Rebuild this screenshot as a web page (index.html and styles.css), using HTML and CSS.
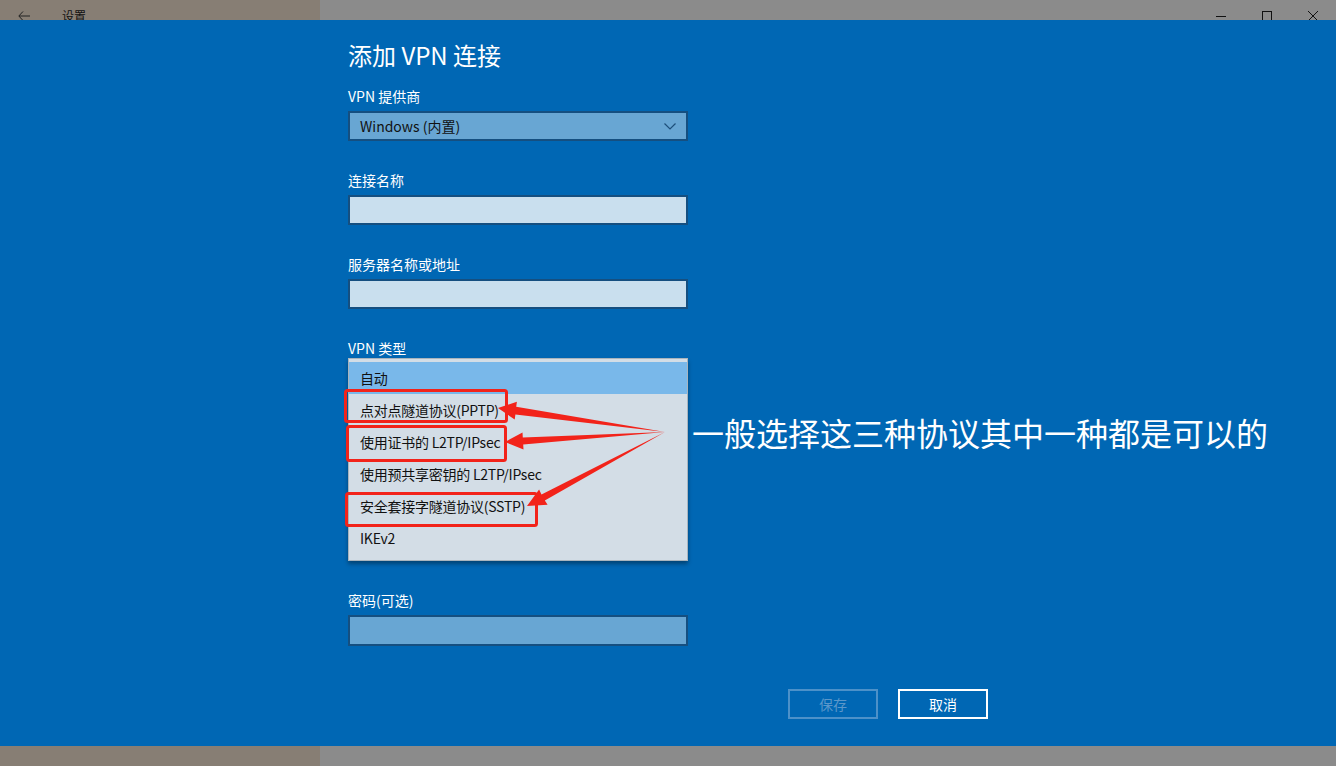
FILE: index.html
```html
<!DOCTYPE html>
<html lang="zh-CN">

<head>
      <meta charset="UTF-8">
      <meta name="viewport" content="width=device-width, initial-scale=1.0">
      <title>设置 - 添加 VPN 连接</title>
      <link rel="stylesheet" href="styles.css">
</head>

<body>
      <!-- 标题栏 -->
      <div class="titlebar">
            <div class="titlebar-left">
                  <div class="back-button">
                        <svg width="12" height="10" viewBox="0 0 12 10">
                              <path d="M12 5H1M5 0.5L0.8 5L5 9.5" fill="none" stroke="#222" stroke-width="1"/>
                        </svg>
                  </div>
                  <span class="app-title">设置</span>
            </div>
            <div class="titlebar-right">
                  <div class="win-control">
                        <svg width="10" height="10" viewBox="0 0 10 10"><path d="M0 5.5H10" stroke="#111" stroke-width="1"/></svg>
                  </div>
                  <div class="win-control">
                        <svg width="10" height="10" viewBox="0 0 10 10"><rect x="0.5" y="0.5" width="9" height="9" fill="none" stroke="#111" stroke-width="1"/></svg>
                  </div>
                  <div class="win-control">
                        <svg width="10" height="10" viewBox="0 0 10 10"><path d="M0 0L10 10M10 0L0 10" stroke="#111" stroke-width="1"/></svg>
                  </div>
            </div>
      </div>

      <!-- 设置面板 -->
      <div class="panel">
            <div class="form">
                  <h1 class="page-title">添加 VPN 连接</h1>

                  <div class="field">
                        <label>VPN 提供商</label>
                        <div class="select">
                              <span>Windows (内置)</span>
                              <svg width="12" height="7" viewBox="0 0 12 7"><path d="M0.5 0.5L6 6L11.5 0.5" fill="none" stroke="#1d4f7a" stroke-width="1.2"/></svg>
                        </div>
                  </div>

                  <div class="field">
                        <label>连接名称</label>
                        <div class="textbox"></div>
                  </div>

                  <div class="field">
                        <label>服务器名称或地址</label>
                        <div class="textbox"></div>
                  </div>

                  <div class="field field-open">
                        <label>VPN 类型</label>
                        <div class="select covered"><span>自动</span></div>
                        <!-- 展开的下拉列表 -->
                        <ul class="dropdown-list">
                              <li class="selected">自动</li>
                              <li>点对点隧道协议(PPTP)</li>
                              <li>使用证书的 L2TP/IPsec</li>
                              <li>使用预共享密钥的 L2TP/IPsec</li>
                              <li>安全套接字隧道协议(SSTP)</li>
                              <li>IKEv2</li>
                        </ul>
                  </div>

                  <!-- 被列表挡住的两项 -->
                  <div class="field covered">
                        <label>登录信息的类型</label>
                        <div class="select"><span>用户名和密码</span></div>
                  </div>

                  <div class="field covered">
                        <label>用户名(可选)</label>
                        <div class="textbox"></div>
                  </div>

                  <div class="field">
                        <label>密码(可选)</label>
                        <div class="textbox textbox-dim"></div>
                  </div>

                  <div class="actions">
                        <button class="btn btn-disabled">保存</button>
                        <button class="btn">取消</button>
                  </div>
            </div>
      </div>

      <!-- 底部条 -->
      <div class="bottombar">
            <div class="titlebar-left"></div>
            <div class="titlebar-right"></div>
      </div>

      <!-- 标注：红框和箭头 -->
      <svg class="markup" width="1336" height="766" viewBox="0 0 1336 766">
            <g fill="none" stroke="#f2231a" stroke-width="3">
                  <rect x="345.5" y="390.5" width="161" height="31" rx="2"/>
                  <rect x="347.5" y="426.5" width="158" height="34" rx="2"/>
                  <rect x="346.5" y="493.5" width="190" height="32" rx="2"/>
            </g>
            <g fill="#f2231a">
                  <polygon points="665,432 516.2,406.8 516.9,401.7 498,408 514.7,419.5 515.4,414.4"/>
                  <polygon points="665,432 522.8,437.4 522.5,432.4 505,442 523.5,449.4 523.2,444.4"/>
                  <polygon points="665,432 541.5,494.5 539.1,489.6 527,506 547.6,504.8 544.8,500.6"/>
            </g>
      </svg>
      <div class="note">一般选择这三种协议其中一种都是可以的</div>
</body>

</html>
```

FILE: styles.css
```css
/* 整个页面 */
body {
      margin: 0;
      width: 1336px;
      height: 766px;
      overflow: hidden;
      position: relative;
      font-family: "Noto Sans CJK SC", "Noto Sans", sans-serif;
      color: #fff;
}

/* 标题栏（被面板遮住一半） */
.titlebar,
.bottombar {
      display: flex;
      height: 20px;
      overflow: hidden;
}

.titlebar-left {
      width: 320px;
      background-color: #877e74;
      display: flex;
      align-items: flex-start;
}

.titlebar-right {
      flex: 1;
      background-color: #8b8b8b;
      display: flex;
      justify-content: flex-end;
}

.back-button {
      width: 48px;
      height: 32px;
      display: flex;
      align-items: center;
      justify-content: center;
}

.app-title {
      margin-left: 14px;
      padding-top: 6px;
      font-size: 12px;
      line-height: 20px;
      color: #111;
}

.win-control {
      width: 46px;
      height: 32px;
      display: flex;
      align-items: center;
      justify-content: center;
}

/* 蓝色设置面板 */
.panel {
      height: 726px;
      background-color: #0067b4;
      padding-left: 348px;
      box-sizing: border-box;
}

.form {
      width: 340px;
      padding-top: 19px;
      display: flex;
      flex-direction: column;
}

.page-title {
      margin: 0 0 15px;
      font-size: 24px;
      font-weight: normal;
      line-height: 32px;
}

.field {
      display: flex;
      flex-direction: column;
      margin-bottom: 29px;
}

.field label {
      font-size: 14px;
      line-height: 20px;
      margin-bottom: 5px;
}

.field-open {
      position: relative;
}

.covered {
      visibility: hidden;
}

/* 下拉框 */
.select {
      height: 30px;
      box-sizing: border-box;
      border: 2px solid #154f80;
      background-color: #68a6d3;
      color: #111;
      font-size: 14px;
      display: flex;
      align-items: center;
      justify-content: space-between;
      padding: 0 10px 0 10px;
}

/* 文本框 */
.textbox {
      height: 30px;
      box-sizing: border-box;
      border: 2px solid #154f80;
      background-color: #c9dfee;
}

.textbox-dim {
      background-color: #68a6d3;
      height: 31px;
}

/* 展开的列表 */
.dropdown-list {
      visibility: visible;
      position: absolute;
      top: 20px;
      left: 0;
      width: 340px;
      box-sizing: border-box;
      margin: 0;
      padding: 3px 0 6px;
      list-style: none;
      background-color: #d3dde6;
      border: 1px solid #a9b4bd;
      box-shadow: 0 3px 4px rgba(0, 0, 0, 0.35);
      z-index: 2;
      color: #111;
}

.dropdown-list li {
      height: 32px;
      line-height: 32px;
      padding-left: 11px;
      font-size: 14px;
      letter-spacing: -0.25px;
}

.dropdown-list li.selected {
      background-color: #79b8ea;
}

/* 按钮 */
.actions {
      width: 640px;
      margin-top: 14px;
      display: flex;
      justify-content: flex-end;
      gap: 20px;
}

.btn {
      width: 90px;
      height: 30px;
      border: 2px solid #fff;
      background-color: transparent;
      color: #fff;
      font-family: inherit;
      font-size: 14px;
      padding: 0;
}

.btn-disabled {
      border-color: #4c91c9;
      color: #5b97ca;
}

/* 标注 */
.markup {
      position: absolute;
      top: 0;
      left: 0;
      pointer-events: none;
      z-index: 3;
}

.note {
      position: absolute;
      left: 692px;
      top: 412px;
      font-size: 32px;
      line-height: 40px;
      color: #fff;
      z-index: 3;
}
```
